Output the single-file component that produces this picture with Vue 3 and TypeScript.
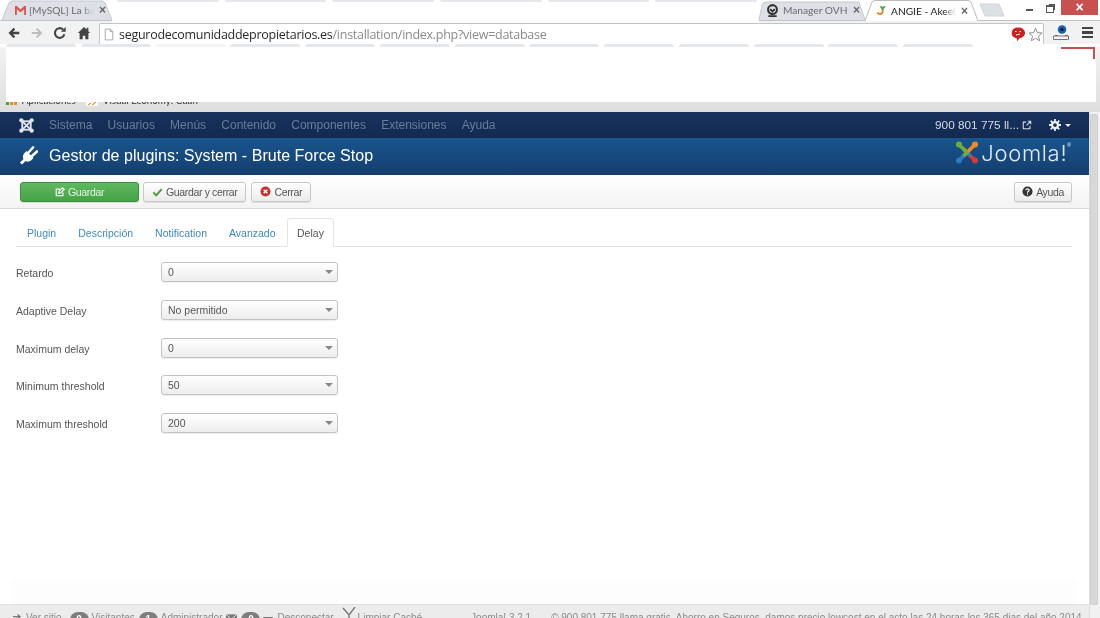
<script setup lang="ts">
const ghostTop = [0, 1, 2, 3, 4, 5]
const ghostBar = [0, 1, 2, 3, 4, 5, 6, 7, 8, 9, 10, 11, 12]
const menu = ['Sistema', 'Usuarios', 'Menús', 'Contenido', 'Componentes', 'Extensiones', 'Ayuda']
const tabs = ['Plugin', 'Descripción', 'Notification', 'Avanzado', 'Delay']
const fields = [
  { label: 'Retardo', value: '0' },
  { label: 'Adaptive Delay', value: 'No permitido' },
  { label: 'Maximum delay', value: '0' },
  { label: 'Minimum threshold', value: '50' },
  { label: 'Maximum threshold', value: '200' }
]
</script>

<template>
  <div class="page">
    <div class="tabstrip">
      <div class="tab gmail">
        <svg class="shape" viewBox="0 0 110 20" preserveAspectRatio="none"><path d="M0 20 7 3Q8 1 10 1H100Q102 1 103 3L110 20" fill="#dde1e7" stroke="#c6c9ce"/></svg>
        <svg class="fav" viewBox="0 0 14 12" width="13" height="11"><path d="M1 11V1h2l4 4 4-4h2v10h-2V4.500L7 8 3 4.500V11z" fill="#d9534a"/></svg>
        <span class="tabtext">[MySQL] La ba</span><span class="x">×</span>
      </div>
      <div class="ghosts-top"><i v-for="g in ghostTop" :key="g"></i></div>
      <div class="tab ovh">
        <svg class="shape" viewBox="0 0 106 20" preserveAspectRatio="none"><path d="M0 20 3 5Q4 2 7 2H100L106 20" fill="#dde1e7" stroke="#c6c9ce"/></svg>
        <svg class="fav" viewBox="0 0 14 14" width="13" height="13"><circle cx="7" cy="6" r="4.800" fill="none" stroke="#333" stroke-width="2.200"/><path d="M2.500 13h9M4.500 5.500l2.500 2.500 2.500-2.500" fill="none" stroke="#333" stroke-width="2"/></svg>
        <span class="tabtext">Manager OVH</span><span class="x">×</span>
      </div>
      <div class="tab angie">
        <svg class="shape" viewBox="0 0 113 21" preserveAspectRatio="none"><path d="M0 21 7 2Q8 .500 10 .500H103Q105 .500 106 2L113 21" fill="#fff" stroke="#bcbcbc"/></svg>
        <svg class="fav" viewBox="0 0 12 14" width="10" height="13"><path d="M8 3v5c0 3.500-4 4.500-6.500 1.500" fill="none" stroke="#e57f22" stroke-width="2.200"/><path d="M5.500 2l2.500 3 2.500-3" fill="none" stroke="#3f9d42" stroke-width="2"/></svg>
        <span class="tabtext">ANGIE - Akeeb</span><span class="x">×</span>
      </div>
      <svg class="newtab" viewBox="0 0 24 12" width="24" height="12"><path d="M0 0H19L24 12H5z" fill="#dde1e7" stroke="#d0d3d8"/></svg>
      <div class="winbtns">
        <span class="wmin"></span>
        <span class="wmax"></span>
        <span class="wclose">×</span>
      </div>
    </div>

    <div class="toolbar">
      <svg class="nav" viewBox="0 0 16 16" width="14" height="14"><path d="M14 8H4M8.500 3 3.500 8l5 5" fill="none" stroke="#444" stroke-width="2.600"/></svg>
      <svg class="nav" viewBox="0 0 16 16" width="14" height="14"><path d="M2 8h10M7.500 3l5 5-5 5" fill="none" stroke="#bdbdbd" stroke-width="2.400"/></svg>
      <svg class="nav" viewBox="0 0 16 16" width="14" height="14"><path d="M13 9.500A5.500 5.500 0 1 1 11.500 4" fill="none" stroke="#444" stroke-width="2.400"/><path d="M9 6.500h5.500V1z" fill="#444"/></svg>
      <svg class="nav home" viewBox="0 0 16 16" width="14" height="14"><path d="M8 1 1 8h2v7h3.500v-4h3v4H13V8h2l-2-2V2h-2v2z" fill="#444"/></svg>
      <div class="omnibox">
        <svg viewBox="0 0 12 14" width="10" height="13"><path d="M1.500.500h6l3 3v10h-9zM7.500.500v3h3" fill="#fff" stroke="#999"/></svg>
        <span class="url"><b>segurodecomunidaddepropietarios.es</b>/installation/index.php?view=database</span>
        <svg class="bubble" viewBox="0 0 14 15" width="14" height="15"><path d="M7 .500a6.500 5.500 0 0 1 1 11l-1.500 3L5.500 11.300A6.500 5.500 0 0 1 7 .500z" fill="#c9211e"/><path d="M4 4.500h1.500M8.500 4.500H10M5 8l4-1" stroke="#fff" fill="none"/></svg>
        <svg class="star" viewBox="0 0 16 16" width="15" height="15"><path d="M8 1.200 10 6l5 .400-3.800 3.300 1.200 5L8 12l-4.400 2.700 1.200-5L1 6.400 6 6z" fill="#fff" stroke="#888"/></svg>
      </div>
      <svg class="ext" viewBox="0 0 16 15" width="16" height="15"><circle cx="9" cy="4.500" r="4.300" fill="#1c62a8"/><circle cx="9" cy="4.500" r="1.800" fill="#10233f"/><path d="M2 10.500h3M12 10.500h3" stroke="#666"/><path d="M.500 11h15v3.500H.500z" fill="#f4f4f4" stroke="#777"/></svg>
      <div class="burger"><i></i><i></i><i></i></div>
    </div>
    <div class="whiteout"></div>

    <div class="ghostbar"><i v-for="g in ghostBar" :key="g" :class="{ cur: g === 2 }"></i></div>
    <div class="blank">
      <div class="bookmarks">
        <span class="apps"><i class="g"></i><i class="o"></i><i class="o"></i></span>
        <span class="bm first-bm">Aplicaciones</span>
        <svg class="bmicon" viewBox="0 0 12 12" width="12" height="12"><rect width="12" height="12" fill="#fff"/><path d="M2 11l3-2M6 11l4-3" stroke="#e59a3c" stroke-width="1.400"/></svg>
        <span class="bm">Visual Economy: Cuan</span>
      </div>
    </div>

    <div class="viewport">
      <div class="main">
        <nav class="topnav">
          <svg class="jmark" viewBox="0 0 16 16" width="15" height="15"><g fill="none" stroke="#dfe4ea" stroke-width="2"><rect x="3.500" y="3.500" width="9" height="9"/><path d="M3 3 13 13M13 3 3 13"/></g><g fill="#dfe4ea"><circle cx="2.500" cy="2.500" r="2.300"/><circle cx="13.500" cy="2.500" r="2.300"/><circle cx="2.500" cy="13.500" r="2.300"/><circle cx="13.500" cy="13.500" r="2.300"/></g></svg>
          <ul class="menu"><li v-for="m in menu" :key="m">{{ m }}</li></ul>
          <span class="site">900 801 775 ll...
            <svg viewBox="0 0 12 12" width="10" height="10"><path d="M9.500 7v3.500h-8v-8H5M7 1.500h3.500V5M10.500 1.500 5.500 6.500" fill="none" stroke="#d5dbe3" stroke-width="1.300"/></svg>
          </span>
          <span class="gear">
            <svg viewBox="0 0 16 16" width="12" height="12"><circle cx="8" cy="8" r="4" fill="none" stroke="#eef" stroke-width="3"/><path d="M8 0v3M8 13v3M0 8h3M13 8h3M2.300 2.300l2.100 2.100M11.600 11.600l2.100 2.100M13.700 2.300l-2.100 2.100M4.400 11.600l-2.100 2.100" stroke="#eef" stroke-width="2.400"/></svg>
            <i class="caret"></i>
          </span>
        </nav>

        <header class="titlebar">
          <svg class="plug" viewBox="0 0 18 18" width="18" height="19"><path d="M6.500 4.500 13.500 11.500 11 14Q8 16 5.500 14.500L2 18 0 16 3.500 12.500Q2 10 4 7z" fill="#fff"/><path d="M8.500 6 13 1M12 9.500 17 5" stroke="#fff" stroke-width="2.600" stroke-linecap="round"/></svg>
          <h1>Gestor de plugins: System - Brute Force Stop</h1>
          <div class="logo">
            <svg viewBox="0 0 24 24" width="24" height="25">
              <g fill="none" stroke-width="3.600" stroke-linejoin="round">
                <path d="M19 19 12 12 15.500 8.500" stroke="#d93a35"/>
                <path d="M5 19 12 12 15.500 15.500" stroke="#2a7cc1"/>
                <path d="M19 5 12 12 8.500 8.500" stroke="#f08a24"/>
                <path d="M5 5 12 12 8.500 15.500" stroke="#6fad3a"/>
              </g>
              <circle cx="4" cy="4" r="3" fill="#6fad3a"/><circle cx="20" cy="4" r="3" fill="#f08a24"/>
              <circle cx="4" cy="20" r="3" fill="#2a7cc1"/><circle cx="20" cy="20" r="3" fill="#d93a35"/>
            </svg>
            <span class="logotext">Joomla!</span><sup>®</sup>
          </div>
        </header>

        <div class="actions">
          <button class="btn save">
            <svg viewBox="0 0 12 12" width="10" height="10"><path d="M9.500 6.500v4h-8v-8H6M5 5 4.500 7.500 7 7l4-4-2-2z" fill="none" stroke="#fff" stroke-width="1.400"/></svg>
            Guardar
          </button>
          <button class="btn">
            <svg viewBox="0 0 12 12" width="11" height="10"><path d="M1 6.500 4.500 10 11 2.500" fill="none" stroke="#4a9d3c" stroke-width="2.400"/></svg>
            Guardar y cerrar
          </button>
          <button class="btn">
            <svg viewBox="0 0 12 12" width="11" height="11"><circle cx="6" cy="6" r="5.500" fill="#c9302c"/><path d="M4 4l4 4M8 4l-4 4" stroke="#fff" stroke-width="1.600"/></svg>
            Cerrar
          </button>
          <button class="btn help">
            <svg viewBox="0 0 12 12" width="11" height="11"><circle cx="6" cy="6" r="5.500" fill="#333"/><path d="M4.200 4.600C4.300 2.700 7.800 2.700 7.800 4.600 7.800 5.900 6 5.800 6 7.300M6 8.300v1.200" stroke="#fff" stroke-width="1.300" fill="none"/></svg>
            Ayuda
          </button>
        </div>

        <section class="content">
          <ul class="tabs">
            <li v-for="t in tabs" :key="t" :class="{ active: t === 'Delay' }">{{ t }}</li>
          </ul>
          <div class="form">
            <div v-for="f in fields" :key="f.label" class="row">
              <label>{{ f.label }}</label>
              <div class="select"><span>{{ f.value }}</span><i class="arrow"></i></div>
            </div>
          </div>
        </section>

        <div class="fade"></div>
        <footer class="status">
          <span class="s first">
            <svg viewBox="0 0 12 10" width="11" height="9"><path d="M1 3h7M6 0.500 9 3 6 5.500M11 7H4M6 4.500 3 7l3 2.500" fill="none" stroke="#777" stroke-width="1.300"/></svg>
            Ver sitio
          </span>
          <span class="pill">0</span><span class="s">Visitantes</span>
          <span class="pill">1</span><span class="s">Administrador</span>
          <svg class="env" viewBox="0 0 12 9" width="11" height="9"><rect width="12" height="9" fill="#777"/><path d="M0 0l6 5 6-5" stroke="#eee" fill="none"/></svg>
          <span class="pill">0</span>
          <span class="s logout">
            <svg viewBox="0 0 10 4" width="10" height="4"><rect width="10" height="2" y="1" fill="#777"/></svg>
            Desconectar
          </span>
          <span class="s broom">
            <svg viewBox="0 0 14 14" width="14" height="14"><path d="M1 1 7 8 13 0M7 8v6" stroke="#777" stroke-width="1.400" fill="none"/></svg>
            Limpiar Caché
          </span>
          <span class="s version">Joomla! 3.2.1</span>
          <span class="s copy">© 900 801 775 llama gratis. Ahorro en Seguros, damos precio lowcost en el acto las 24 horas los 365 dias del año 2014</span>
        </footer>
      </div>
      <div class="scrollbar"><div class="thumb"></div></div>
    </div>

    <div class="overlay"><span class="corner"></span></div>
  </div>
</template>

<style>
html, body { margin: 0; background: #fff; }
</style>

<style scoped>
.page {
  position: relative;
  width: 1100px;
  height: 618px;
  overflow: hidden;
  background: #fff;
  font-family: "Liberation Sans", Arial, sans-serif;
  filter: blur(0.35px);
}
ul { list-style: none; margin: 0; padding: 0; }

/* browser chrome */
.tabstrip {
  position: relative;
  z-index: 2;
  display: flex;
  height: 20px;
  align-items: stretch;
  padding-left: 2px;
  background: #fff;
  font-family: Lato, "Open Sans", sans-serif;
  font-size: 10.200px;
}
.tab {
  position: relative;
  display: flex;
  align-items: center;
  box-sizing: border-box;
  flex: none;
}
.shape {
  position: absolute;
  left: 0;
  top: 0;
  width: 100%;
  height: 100%;
  overflow: visible;
}
.fav, .tabtext, .x { position: relative; }
.gmail { width: 110px; padding: 0 7px 0 12px; color: #6b6b6b; }
.ovh { width: 106px; padding: 0 6px 0 7px; color: #6b6b6b; }
.angie { width: 113px; height: 21px; padding: 0 11px 0 11px; color: #222; z-index: 1; }
.fav { flex: none; margin-right: 4px; }
.gmail .fav { margin-right: 2px; }
.angie .fav { margin-right: 5px; }
.tabtext {
  flex: 1;
  min-width: 0;
  overflow: hidden;
  white-space: nowrap;
  margin-right: 5px;
  -webkit-mask-image: linear-gradient(to right, #000 82%, transparent);
  mask-image: linear-gradient(to right, #000 82%, transparent);
}
.ovh .tabtext { -webkit-mask-image: none; mask-image: none; }
.x { flex: none; width: 6px; text-align: center; font: 700 12px/1 "Liberation Sans", sans-serif; color: #666; }
.ghosts-top {
  flex: none;
  width: 647px;
  box-sizing: border-box;
  align-self: flex-start;
  display: flex;
  gap: 6px;
  padding: 0 2px 0 5px;
  position: relative;
  z-index: 2;
}
.ghosts-top i { flex: 1; height: 2px; background: #e4e7eb; border-radius: 0 0 3px 3px; }
.newtab { flex: none; margin: 4px 0 0 2px; overflow: visible; }
.winbtns {
  margin-left: auto;
  display: flex;
  align-items: flex-start;
  flex: none;
}
.wmin { width: 7px; height: 2px; background: #555; margin: 9px 13px 0 0; }
.wmax {
  width: 6px;
  height: 5px;
  border: 1px solid #555;
  border-top-width: 2px;
  margin: 5px 7px 0 0;
  box-shadow: 2px -2px 0 -1px #555;
}
.wclose {
  width: 37px;
  height: 15px;
  margin-right: 2px;
  background: #c75050;
  color: #fff;
  text-align: center;
  font: 700 14px/14px "Liberation Sans", sans-serif;
}
.toolbar {
  display: flex;
  align-items: center;
  height: 23px;
  background: #f2f2f2;
  border-top: 1px solid #c2c2c2;
  padding-left: 7px;
}
.whiteout {
  position: absolute;
  left: 112px;
  top: 2px;
  width: 647px;
  height: 21px;
  background: #fff;
  z-index: 1;
}
.nav { flex: none; margin-right: 9px; }
.home { margin-left: 1px; margin-right: 8px; }
.omnibox {
  flex: 1;
  align-self: stretch;
  margin-top: 2px;
  display: flex;
  align-items: center;
  background: #fff;
  border: 1px solid #c4c4c4;
  border-bottom: 0;
  border-radius: 2px 2px 0 0;
  padding: 0 0 0 4px;
}
.url {
  flex: 1;
  margin-left: 5px;
  font-family: "Open Sans", "Noto Sans", sans-serif;
  font-size: 12.500px;
  letter-spacing: -0.27px;
  color: #8b8b8b;
  white-space: nowrap;
}
.url b { font-weight: 400; color: #2b2b2b; }
.bubble { flex: none; margin-right: 3px; }
.ext { flex: none; margin: 0 13px 0 9px; }
.burger { flex: none; width: 11px; margin-right: 7px; display: flex; flex-direction: column; gap: 2px; }
.burger i { display: block; height: 2.500px; background: #444; }
.ghostbar {
  display: flex;
  gap: 4.700px;
  height: 3px;
  padding: 0 127px 0 6px;
  background: #fff;
}
.ghostbar i { flex: 1; background: #e5e8eb; border-radius: 3px 3px 0 0; }
.ghostbar i.cur { background: #f4f4f4; }
.blank {
  height: 65px;
  box-sizing: border-box;
  padding: 0 0 5px 6px;
  display: flex;
  align-items: flex-end;
  background: linear-gradient(#f2f2f2, #dedede);
}
.bookmarks {
  display: flex;
  align-items: center;
  height: 14px;
  font-family: Lato, "Open Sans", sans-serif;
  font-size: 9.800px;
  color: #333;
}
.apps { width: 11px; display: flex; flex-wrap: wrap; align-content: flex-end; gap: 1px; margin-top: 6px; }
.apps i { width: 3px; height: 3px; }
.apps .g { background: #4a9d3c; }
.apps .o { background: #e8912a; }
.first-bm { margin-left: 5px; }
.bmicon { margin: 0 5px 0 10px; }
.viewport {
  display: flex;
  height: 506px;
  background: #dfdfdf;
}

/* white patch lying over the capture */
.overlay {
  position: absolute;
  left: 6px;
  top: 47px;
  width: 1090px;
  height: 55px;
  background: #fff;
}
.corner {
  position: absolute;
  right: 1px;
  top: 0;
  width: 34px;
  height: 12px;
  border-top: 2px solid #c75050;
  border-right: 2px solid #c75050;
  box-sizing: border-box;
}

/* joomla admin */
.main {
  flex: 1;
  min-width: 0;
  display: flex;
  flex-direction: column;
  background: #fff;
  overflow: hidden;
}
.topnav {
  display: flex;
  align-items: center;
  height: 26px;
  flex: none;
  background: linear-gradient(#17325d, #132a50);
  color: #6a7d97;
  font-size: 12px;
  padding-left: 19px;
}
.jmark { flex: none; }
.menu { display: flex; gap: 15.200px; margin-left: 15px; flex: 1; }
.site { color: #d5dbe3; font-size: 11.800px; margin-right: 17px; white-space: nowrap; display: flex; align-items: center; gap: 3px; }
.gear { display: flex; align-items: center; gap: 4px; margin-right: 18px; }
.caret { width: 0; height: 0; border: 3px solid transparent; border-top: 3px solid #e8edf3; margin-top: 3px; }
.titlebar {
  display: flex;
  align-items: center;
  height: 37px;
  flex: none;
  box-sizing: border-box;
  background: linear-gradient(#17558d, #163e70);
  border-bottom: 1px solid #123a68;
  padding-left: 20px;
  color: #fff;
}
.plug { flex: none; margin-top: -2px; }
h1 {
  flex: 1;
  margin: 0 0 0 11px;
  font-size: 16px;
  font-weight: 400;
  letter-spacing: 0.03px;
}
.logo {
  display: flex;
  align-items: center;
  gap: 2px;
  margin: -7px 18px 0 0;
}
.logotext {
  font-family: Inter, "Open Sans", sans-serif;
  font-size: 22px;
  font-weight: 300;
  line-height: 26px;
  color: #e3ebf3;
  letter-spacing: 0.7px;
}
.logo sup { font-size: 5px; align-self: flex-start; margin: 3px 0 0 -2px; line-height: 1; }
.actions {
  display: flex;
  align-items: center;
  gap: 5px;
  height: 34px;
  flex: none;
  box-sizing: border-box;
  background: linear-gradient(#fff, #f3f3f3);
  border-bottom: 1px solid #dcdcdc;
  padding: 0 17px 0 20px;
}
.btn {
  display: inline-flex;
  align-items: center;
  justify-content: center;
  gap: 3px;
  height: 20px;
  padding: 0 8px;
  background: linear-gradient(#fff, #ebebeb);
  border: 1px solid #c8c8c8;
  border-radius: 3px;
  box-shadow: 0 1px 1px rgba(0, 0, 0, 0.1);
  color: #555;
  font: 10.500px "Liberation Sans", Arial, sans-serif;
  letter-spacing: -0.35px;
}
.save {
  width: 119px;
  margin-right: -1px;
  background: linear-gradient(#60b960, #45a245);
  border-color: #3c8f3c;
  color: #e6f3e6;
}
.help { margin-left: auto; padding: 0 7px; }
.content {
  flex: 1;
  min-height: 0;
  padding: 9px 17px 0 16px;
}
.tabs {
  display: flex;
  height: 28px;
  border-bottom: 1px solid #e4e4e4;
  font-size: 10.500px;
  color: #3f88bd;
}
.tabs li {
  padding: 0 11px;
  line-height: 30px;
  height: 29px;
  box-sizing: border-box;
}
.tabs li.active {
  color: #555;
  background: #fff;
  border: 1px solid #e4e4e4;
  border-bottom-color: #fff;
  border-radius: 3px 3px 0 0;
  padding: 0 9.500px;
  line-height: 28px;
}
.form { padding-top: 15px; display: flex; flex-direction: column; gap: 17.750px; }
.row {
  display: flex;
  align-items: center;
  height: 20px;
  font-size: 10.500px;
  color: #555;
}
.row label { width: 145px; flex: none; position: relative; top: 1px; }
.select {
  display: flex;
  align-items: center;
  justify-content: space-between;
  box-sizing: border-box;
  width: 177px;
  height: 20px;
  padding: 0 4px 0 6px;
  background: linear-gradient(#fff, #ededed);
  border: 1px solid #c4c4c4;
  border-radius: 3px;
  box-shadow: 0 1px 1px rgba(0, 0, 0, 0.07);
}
.arrow { width: 0; height: 0; border: 4px solid transparent; border-top: 4px solid #888; border-bottom: 0; }
.fade { height: 24px; margin: 0 12px; background: #fdfdfd; flex: none; }
.status {
  display: flex;
  align-items: flex-start;
  height: 14px;
  flex: none;
  box-sizing: border-box;
  background: #ececec;
  border-top: 1px solid #e0e0e0;
  padding: 5px 0 0 12px;
  color: #8a8a8a;
  font-size: 10px;
  line-height: 16px;
  white-space: nowrap;
  overflow: visible;
}
.s { display: inline-flex; align-items: center; gap: 4px; flex: none; }
.first { gap: 3px; margin-right: 3px; }
.pill {
  flex: none;
  width: 19px;
  height: 16px;
  margin: 2px 3px 0 0;
  border-radius: 8px;
  background: #7d7d7d;
  color: #fff;
  text-align: center;
  font-weight: 700;
}
.s + .pill { margin-left: 4px; }
.first + .pill { margin-left: 5px; }
.env { margin: 4px 4px 0; flex: none; }
.env + .pill { margin-left: 0; }
.broom { margin-left: 8px; gap: 2px; }
.broom svg { margin-top: -8px; }
.version { margin-left: 49px; }
.copy { margin-left: 20px; }
.scrollbar {
  width: 11px;
  flex: none;
  background: #f1f1f1;
  border-left: 1px solid #e0e0e0;
  box-sizing: border-box;
  padding: 2px 2px 0 0;
}
.thumb { height: 491px; background: #d8d8d8; border: 1px solid #cfcfcf; border-radius: 2px; box-sizing: border-box; }
</style>
